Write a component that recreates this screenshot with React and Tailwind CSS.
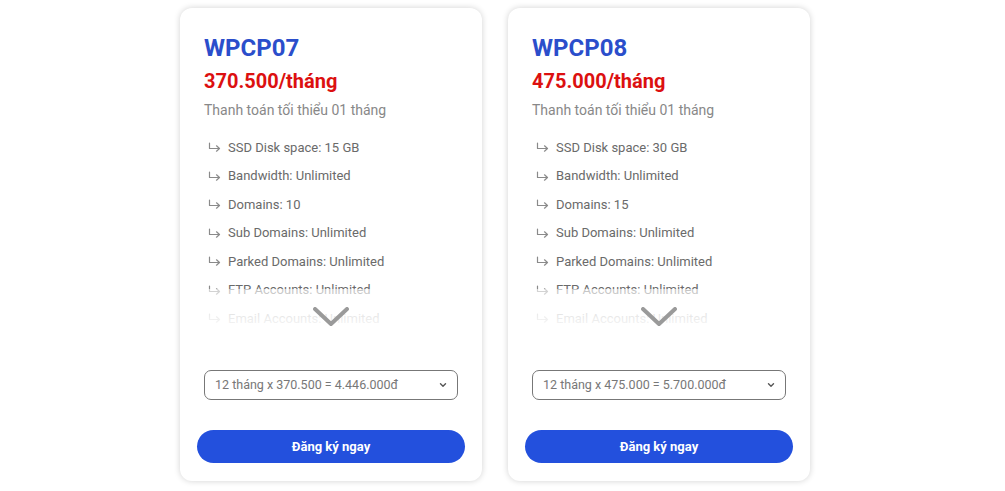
import React from "react";

const plans = [
  { name: "WPCP07", price: "370.500/tháng", disk: "15 GB", domains: "10", select: "12 tháng x 370.500 = 4.446.000đ" },
  { name: "WPCP08", price: "475.000/tháng", disk: "30 GB", domains: "15", select: "12 tháng x 475.000 = 5.700.000đ" },
];

function Arrow() {
  return (
    <svg className="mr-[7px] ml-[4px] shrink-0" width="13" height="10" viewBox="0 0 13 10">
      <path d="M1.5 1 V6.5 H11.5 M8.5 3.8 L11.5 6.5 L8.5 9.2" fill="none" stroke="#8a8a8a" strokeWidth="1.2" strokeLinecap="round" strokeLinejoin="round" />
    </svg>
  );
}

function Card({ p }) {
  const features = [
    `SSD Disk space: ${p.disk}`,
    "Bandwidth: Unlimited",
    `Domains: ${p.domains}`,
    "Sub Domains: Unlimited",
    "Parked Domains: Unlimited",
    "FTP Accounts: Unlimited",
    "Email Accounts: Unlimited",
  ];
  return (
    <div className="w-[302px] h-[473px] shrink-0 bg-white rounded-[12px] shadow-[0_0_6px_rgba(0,0,0,0.18)] flex flex-col pt-[23px]">
      <div className="px-[24px]">
        <div className="text-[24px] leading-[34px] font-bold text-[#2b4ecb]">{p.name}</div>
        <div className="text-[20px] leading-[28px] font-bold text-[#dc1010] mt-[2px]">{p.price}</div>
        <div className="text-[14px] leading-[20px] text-[#888] mt-[5px]">Thanh toán tối thiểu 01 tháng</div>
      </div>
      <div className="relative mt-[13px] h-[200px] shrink-0 overflow-hidden px-[24px]">
        <ul className="flex flex-col">
          {features.map((f) => (
            <li key={f} className="flex items-center h-[28.5px] text-[13px] text-[#6a6a6a] whitespace-nowrap">
              <Arrow />
              {f}
            </li>
          ))}
        </ul>
        <div className="absolute left-0 right-0 bottom-0 h-[44px] bg-gradient-to-b from-white/60 to-white"></div>
        <svg className="absolute left-1/2 -translate-x-1/2 top-[174px]" width="36" height="20" viewBox="0 0 36 20">
          <path d="M2 2 L18 17 L34 2" fill="none" stroke="#9a9a9a" strokeWidth="4" strokeLinecap="round" strokeLinejoin="round" />
        </svg>
      </div>
      <div className="px-[24px] mt-[37px]">
        <div className="h-[30px] border border-[#777] rounded-[7px] flex items-center justify-between pl-[10px] pr-[9px] text-[12.5px] text-[#777]">
          <span>{p.select}</span>
          <svg width="10" height="10" viewBox="0 0 10 10">
            <path d="M2.5 3.8 L5 6.2 L7.5 3.8" fill="none" stroke="#555" strokeWidth="1.4" strokeLinecap="round" strokeLinejoin="round" />
          </svg>
        </div>
      </div>
      <div className="px-[17px] mt-[30px]">
        <button className="w-full h-[33px] rounded-full bg-[#2350dd] text-white text-[13px] font-bold">Đăng ký ngay</button>
      </div>
    </div>
  );
}

export default function App() {
  return (
    <div className="w-[1005px] h-[491px] bg-white flex gap-[26px] pl-[180px] pt-[8px]" style={{ fontFamily: "Roboto, 'Noto Sans', sans-serif" }}>
      {plans.map((p) => (
        <Card key={p.name} p={p} />
      ))}
    </div>
  );
}
